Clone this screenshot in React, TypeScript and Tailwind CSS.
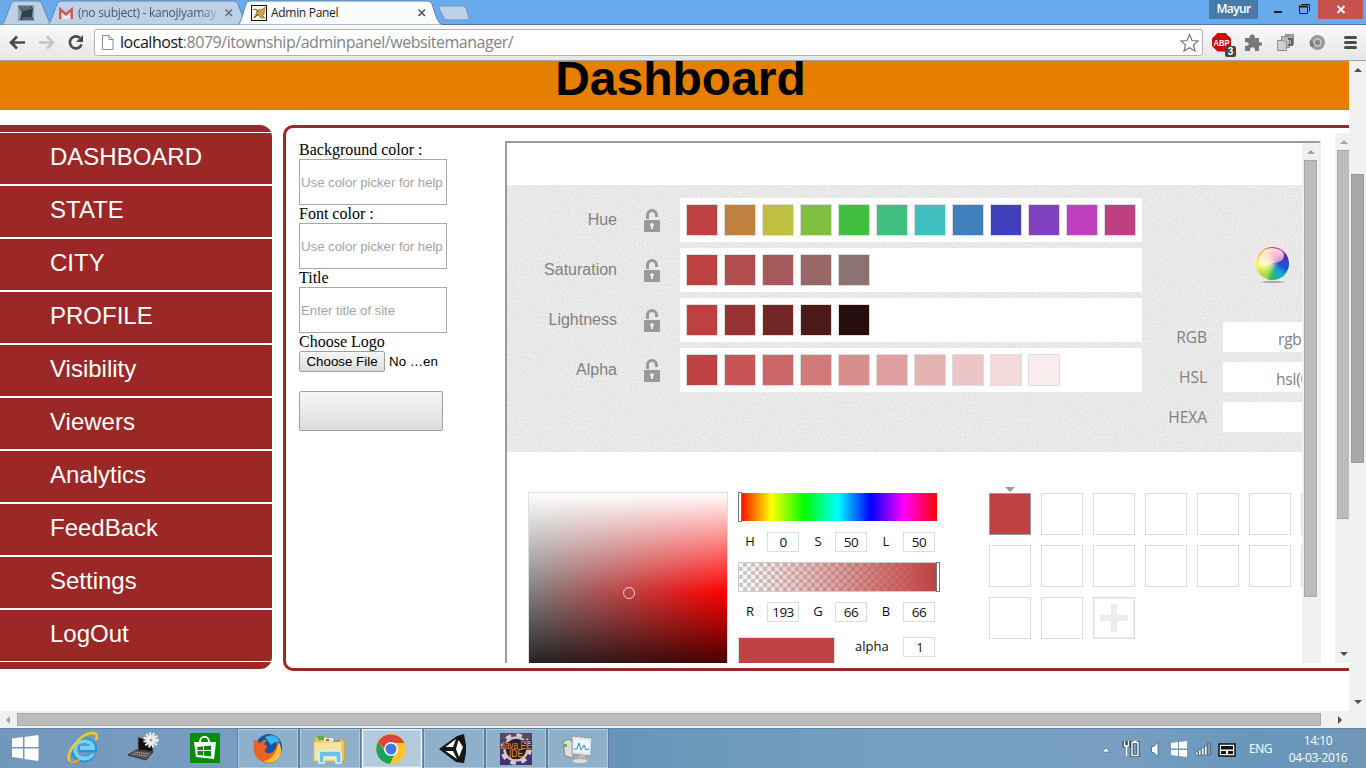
import React from 'react';

const UI = "font-['Open_Sans','Noto_Sans',sans-serif]";
const SANS = "font-['Liberation_Sans',Arial,sans-serif]";

function TabStrip() {
  return (
    <div className="relative flex h-[24px] w-full bg-[#67abec]">
      <svg className="absolute left-0 top-0" width="1366" height="25" viewBox="0 0 1366 25">
        <path d="M0 25 C4 24 4 22 6 17 L11 4 Q12 1 15 1 H38 Q41 1 42 4 L48 19 Q50 24 54 24.5 V25 Z" fill="#bcd1e6" stroke="#6287aa" />
        <path d="M47 25 Q50 24 51 20 L57 4 Q58 1 61 1 H234 Q237 1 238 4 L244 20 Q246 25 249 25 Z" fill="#bcd1e6" stroke="#6287aa" />
        <path d="M237 25 Q240 24 241 20 L246 4 Q247 1 250 1 H427 Q431 1 432 4 L437 19 Q439 24 443 25 Z" fill="#fbfbfb" stroke="#5f86ad" />
        <path d="M442 24.5 H1366" stroke="#4c79a6" />
        <path d="M440 6 H463 Q465 6 466 8 L469 18 Q469 20 467 20 H448 Q445 20 444 18 L439 8 Q438 6 440 6 Z" fill="#bcd1e6" stroke="#6c96bf" />
        <rect x="18" y="5" width="16" height="16" fill="#8e9fb0" />
        <path d="M18 6 H31 L33 8 L32 17 L34 20 H20 L22 12Z" fill="#323e48" />
        <path d="M18 6 H30 L32 9 L23 11Z" fill="#5c6f80" />
        <path d="M23 17 H33 V20 H21Z" fill="#4c6374" />
        <path d="M60.300 19 V9.500 L66 14.500 L71.700 9.500 V19" fill="#e8eaf0" stroke="#cf5550" strokeWidth="2.400" />
        <rect x="251.500" y="5.500" width="15" height="15" fill="#faf6e8" stroke="#111" />
        <path d="M257 11 L259 9 L261 10 L265 7 L264 14 L262 15 L265 18 H261 L258 15 L254 18 L256 14Z" fill="#d8a13b" stroke="#8a7540" strokeWidth=".700" />
        <path d="M253 10 L256 9 L258 12 M254 18 L258 14" stroke="#333" strokeWidth=".800" fill="none" />
        <path d="M225.500 9.500 L232 16 M232 9.500 L225.500 16" stroke="#66717c" strokeWidth="1.600" />
        <path d="M418.500 9.500 L425 16 M425 9.500 L418.500 16" stroke="#555" strokeWidth="1.600" />
      </svg>
      <div className={`${UI} relative flex w-full text-[12px] leading-[26px]`}>
        <span className="ml-[78px] w-[142px] whitespace-nowrap bg-gradient-to-r from-[#46525e] from-85% to-[#b0c4d8] bg-clip-text tracking-[-0.27px] text-transparent">(no subject) - kanojiyamay</span>
        <span className="ml-[51px] whitespace-nowrap tracking-[-0.3px] text-[#222]">Admin Panel</span>
      </div>
      <div className="relative flex shrink-0">
        <div className={`${UI} h-[19px] w-[49px] bg-[#477aa8] text-center text-[12px] font-semibold leading-[18px] tracking-[-0.6px] text-white`}>Mayur</div>
        <svg width="60" height="19" viewBox="0 0 60 19" fill="none" stroke="#1d1d1d">
          <path d="M16 12 H24" strokeWidth="2" />
          <path d="M42 6.500 H49.500 V13.500 H41.500 V6.500 M43.500 4.500 H51.500 V11.500" />
          <path d="M41 6.500 H50" strokeWidth="2" />
        </svg>
        <svg className="mr-[3px] bg-[#c75050]" width="45" height="19" viewBox="0 0 45 19">
          <path d="M19.500 6 L26.500 13 M26.500 6 L19.500 13" stroke="#fff" strokeWidth="1.800" />
        </svg>
      </div>
    </div>
  );
}

function Toolbar() {
  return (
    <div className="flex h-[37px] w-full items-start border-b border-t border-b-[#a3a3a3] border-t-[#e7ebef] bg-gradient-to-b from-[#fafafa] to-[#e6e6e6]">
      <svg width="94" height="34" viewBox="0 0 94 34" fill="none">
        <path d="M10.500 17.500 H25 M17 11.500 L11 17.500 L17 23.500" stroke="#4a4a4a" strokeWidth="2.700" />
        <path d="M39 17.500 H53 M47 11.500 L53 17.500 L47 23.500" stroke="#c4c4c4" strokeWidth="2.600" />
        <path d="M80 13 A6 6 0 1 0 81.500 19.500" stroke="#4a4a4a" strokeWidth="2.600" />
        <path d="M83 10 V17 H76 Z" fill="#4a4a4a" />
      </svg>
      <div className="mt-[4px] flex h-[27px] w-[1109px] rounded-[3px] border border-[#b3b3b3] bg-white">
        <svg width="25" height="25" viewBox="0 0 25 25" fill="#fff" stroke="#8b8b8b">
          <path d="M7.500 5.500 H14 L18 9.500 V19.500 H7.500 Z M14 5.500 V9.500 H18" />
        </svg>
        <div className={`${UI} grow whitespace-nowrap text-[16px] leading-[25px] tracking-[-0.47px] text-[#838383]`}>
          <span className="text-[#151515]">localhost</span>:8079/itownship/adminpanel/websitemanager/
        </div>
        <svg width="25" height="25" viewBox="0 0 25 25" fill="#fff" stroke="#777" strokeWidth="1.200">
          <path d="M12.500 4.500 L15 10.500 L21 10.900 L16.500 14.900 L18 21 L12.500 17.700 L7 21 L8.500 14.900 L4 10.900 L10 10.500 Z" />
        </svg>
      </div>
      <svg width="163" height="34" viewBox="1203 25 163 34">
        <path d="M1217.500 33 H1225.500 L1231 38.500 V46 L1225.500 51.500 H1217.500 L1212 46 V38.500 Z" fill="#cc0b0b" />
        <text x="1221.500" y="45.500" textAnchor="middle" fontFamily="Liberation Sans" fontWeight="700" fontSize="8.500" fill="#fff" textLength="16" lengthAdjust="spacingAndGlyphs">ABP</text>
        <rect x="1225" y="46" width="11" height="11" rx="2" fill="#444" />
        <text x="1230.500" y="55" textAnchor="middle" fontFamily="Liberation Sans" fontWeight="700" fontSize="10" fill="#fff">3</text>
        <path d="M1245 38 H1250 C1247.500 34 1256.500 33 1254.500 38 H1259 V42.500 C1263 40.500 1263 47.500 1259 45.500 V51 H1255 C1256 46 1249 46 1250 51 H1245 V46 C1250 46 1250 42 1245 42Z" fill="#777" />
        <g fill="#a9a9a9" stroke="#8c8c8c"><path d="M1285.500 34.500h8v10h-8z" /><path d="M1281.500 36.500h8v11h-8z" fill="#bbb" /><path d="M1277.500 40.500h6l3 3v7h-9z" fill="#d0d0d0" /></g>
        <path d="M1288 39h4v6h-4" fill="none" stroke="#666" strokeWidth="2" />
        <circle cx="1317.500" cy="42.500" r="7.500" fill="#999" /><path d="M1311 47 A8 8 0 0 1 1310 40 L1317 45Z" fill="#777" />
        <circle cx="1317.500" cy="42.500" r="3.500" fill="#888" stroke="#ccc" strokeWidth="1.500" />
        <path d="M1345.500 37.500 H1355.500 M1345.500 42.500 H1355.500 M1345.500 47.500 H1355.500" stroke="#4d4d4d" strokeWidth="3" strokeLinecap="round" />
      </svg>
    </div>
  );
}

const MENU = ['DASHBOARD', 'STATE', 'CITY', 'PROFILE', 'Visibility', 'Viewers', 'Analytics', 'FeedBack', 'Settings', 'LogOut'];

function Sidebar() {
  return (
    <nav className="h-[544px] w-[272px] shrink-0 rounded-r-[12px] bg-[#9c2727] py-[7px]">
      {MENU.map((m) => (
        <div key={m} className={`${SANS} h-[53px] border-y border-white pl-[50px] text-[24px] leading-[47px] text-white`}>{m}</div>
      ))}
    </nav>
  );
}

function Field({ label, hint }: { label: string; hint: string }) {
  return (
    <>
      <div className="h-[18px] text-[16px] leading-[18px]">{label}</div>
      <div className={`${SANS} h-[46px] w-[148px] whitespace-nowrap border border-[#a9a9a9] pl-px text-[13.333px] leading-[45px] tracking-[-0.08px] text-[#a4a4a4]`}>{hint}</div>
    </>
  );
}

function SettingsForm() {
  return (
    <form className="w-[206px] shrink-0 pt-[8px] font-['Liberation_Serif','Times_New_Roman',serif] text-black">
      <Field label="Background color :" hint="Use color picker for help" />
      <Field label="Font color :" hint="Use color picker for help" />
      <Field label="Title" hint="Enter title of site" />
      <div className="h-[18px] text-[16px] leading-[18px]">Choose Logo</div>
      <div className={`${SANS} flex h-[21px] text-[13.333px] leading-[19px]`}>
        <div className="w-[86px] rounded-[2px] border border-[#a0a0a0] bg-gradient-to-b from-[#f6f6f6] to-[#dcdcdc] text-center">Choose File</div>
        <span className="ml-[4px] leading-[21px]">No …en</span>
      </div>
      <div className="mt-[19px] h-[40px] w-[144px] rounded-[2px] border border-[#a0a0a0] bg-gradient-to-b from-[#f6f6f6] to-[#dcdcdc]" />
    </form>
  );
}

const ROWS: [string, string[]][] = [
  ['Hue', ['bg-[#bf4040]', 'bg-[#bf8040]', 'bg-[#bfbf40]', 'bg-[#80bf40]', 'bg-[#40bf40]', 'bg-[#40bf80]', 'bg-[#40bfbf]', 'bg-[#4080bf]', 'bg-[#4040bf]', 'bg-[#8040bf]', 'bg-[#bf40bf]', 'bg-[#bf4080]']],
  ['Saturation', ['bg-[#bf4040]', 'bg-[#b24d4d]', 'bg-[#a65959]', 'bg-[#996666]', 'bg-[#8c7373]']],
  ['Lightness', ['bg-[#bf4040]', 'bg-[#993333]', 'bg-[#732626]', 'bg-[#4c1919]', 'bg-[#260d0d]']],
  ['Alpha', ['bg-[#c14242]', 'bg-[#c75555]', 'bg-[#cd6666]', 'bg-[#d37a7a]', 'bg-[#da8d8d]', 'bg-[#e0a0a0]', 'bg-[#e6b3b3]', 'bg-[#ecc6c6]', 'bg-[#f3d9d9]', 'bg-[#f9ecec]']],
];

function Lock() {
  return (
    <svg className="ml-[27px] mt-[2px]" width="16" height="23" viewBox="0 0 16 23">
      <path d="M3.500 10 V6 A4.500 4.500 0 0 1 12.500 6 V8" fill="none" stroke="#999" strokeWidth="3" />
      <rect y="11" width="16" height="12" fill="#999" />
      <path d="M8 14 A2 2 0 0 1 9 17.700 V20 H7 V17.700 A2 2 0 0 1 8 14" fill="#eee" />
    </svg>
  );
}

function ColorFormats() {
  const formats = [['RGB', 'rgb(193, 66, 66)', 'pl-[55px]'], ['HSL', 'hsl(0, 50%, 50%)', 'pl-[53px]'], ['HEXA', '', 'pl-0']];
  return (
    <div className="w-[160px] shrink-0">
      <svg className="ml-[112px] mt-[61px]" width="36" height="39" viewBox="0 0 36 39">
        <defs>
          <linearGradient id="gloss" x1="0" y1="0" x2="0" y2="1"><stop offset="0" stopColor="#fff" /><stop offset="1" stopColor="#fff" stopOpacity=".45" /></linearGradient>
          <radialGradient id="fade"><stop stopColor="#fff" stopOpacity=".7" /><stop offset="1" stopColor="#fff" stopOpacity="0" /></radialGradient>
          <clipPath id="ball"><circle cx="18.500" cy="17.500" r="16.500" /></clipPath>
          <filter id="soft"><feGaussianBlur stdDeviation="2" /></filter>
          <filter id="shade" x="-20%" y="-100%" width="140%" height="300%"><feGaussianBlur stdDeviation="1 .5" /></filter>
        </defs>
        <ellipse cx="19" cy="36" rx="11" ry="1" fill="#888" opacity=".7" filter="url(#shade)" />
        <g clipPath="url(#ball)"><g filter="url(#soft)">
          <path d="M18.500 17.500 L5 -8 H25Z" fill="#ff3b18" /><path d="M18.500 17.500 L22 -8 L42 3Z" fill="#e9368f" /><path d="M18.500 17.500 L36 0 L44 17Z" fill="#542f9d" />
          <path d="M18.500 17.500 L42 12 L35 37Z" fill="#1c50dc" /><path d="M18.500 17.500 L36 30 L22 42Z" fill="#15aacb" /><path d="M18.500 17.500 L26 42 L6 40Z" fill="#29b765" />
          <path d="M18.500 17.500 L10 42 L-5 23Z" fill="#b3e029" /><path d="M18.500 17.500 L-5 28 V6Z" fill="#f3f22b" /><path d="M18.500 17.500 L-5 10 L8 -4Z" fill="#ffab25" />
        </g></g>
        <circle cx="11" cy="16" r="13" fill="url(#fade)" />
        <path d="M5 14 Q7 2 18 2 Q30 3 30 10 Q29 17 19 17 Q13 22 4 19Z" fill="url(#gloss)" opacity=".85" />
      </svg>
      <div className={`${UI} mt-[37px] flex flex-col gap-[10px] text-[15px] leading-[31px] text-[#808080]`}>
        {formats.map(([name, value, pad]) => (
          <div key={name} className="flex h-[30px]">
            <span className="w-[65px] text-right text-[15.5px]">{name}</span>
            <div className={`ml-[16px] w-[79px] overflow-hidden whitespace-nowrap bg-white text-[15.5px] leading-[34px] tracking-[-0.2px] ${pad}`}>{value}</div>
          </div>
        ))}
      </div>
    </div>
  );
}

function Palettes() {
  return (
    <div className="relative mt-[42px] flex h-[267px] overflow-hidden bg-[#f0f0f0]">
      <svg className="absolute left-0 top-0" width="795" height="267">
        <filter id="grain" x="0" y="0" width="1" height="1"><feTurbulence type="fractalNoise" baseFrequency="0.55" numOctaves="2" /><feColorMatrix values="0 0 0 0 0  0 0 0 0 0  0 0 0 0 0  0.12 0 0 0 -0.027" /></filter>
        <rect width="795" height="267" filter="url(#grain)" />
      </svg>
      <div className="relative flex flex-col gap-[6px] pt-[13px]">
        {ROWS.map(([name, colors]) => (
          <div key={name} className="flex h-[44px]">
            <span className={`${SANS} w-[110px] pt-[1px] text-right text-[16px] leading-[42px] text-[#808080]`}>{name}</span>
            <div className="w-[63px] shrink-0 pt-[9px]"><Lock /></div>
            <div className="flex w-[462px] gap-[6px] bg-white p-[6px]">
              {colors.map((c) => <div key={c} className={`h-[32px] w-[32px] border border-[#ddd] ${c}`} />)}
            </div>
          </div>
        ))}
      </div>
      <div className="relative"><ColorFormats /></div>
    </div>
  );
}

function Values({ items }: { items: [string, string][] }) {
  return (
    <div className={`${UI} flex h-[20px] text-[13px]`}>
      {items.map(([k, v], i) => (
        <div key={k} className={i === 0 ? 'flex w-[61px]' : 'flex w-[68px]'}>
          <span className={i === 0 ? 'w-[29px] pr-[5px] text-center leading-[18px]' : 'w-[36px] pl-[2px] text-center leading-[18px]'}>{k}</span>
          <div className={`${UI} h-[20px] w-[32px] border border-[#ddd] text-center text-[13.5px] leading-[19px] tracking-[-0.5px]`}>{v}</div>
        </div>
      ))}
    </div>
  );
}

function Picker() {
  return (
    <div className="flex h-[211px] overflow-hidden pl-[21px] text-[#111]">
      <div className="relative mt-[40px] h-[200px] w-[200px] shrink-0 border border-[#ddd] bg-[linear-gradient(to_bottom,#fff_0%,#ffffff00_50%,#00000000_50%,#000_100%),linear-gradient(to_right,#808080,#f00)]">
        <div className="absolute left-[94px] top-[94px] h-[12px] w-[12px] rounded-full border-[1.5px] border-[#ddd]" />
      </div>
      <div className="ml-[10px] mt-[40px] w-[202px] shrink-0">
        <div className="flex h-[30px]">
          <div className="h-[30px] w-[4px] border border-[#777] bg-white" />
          <div className="mt-px h-[28px] w-[195px] bg-[linear-gradient(to_right,#ff1500,#ff0_15%,#0f0_32%,#0ff_49%,#00f_66%,#f0f_83%,#f00)]" />
        </div>
        <div className="mt-[10px]"><Values items={[['H', '0'], ['S', '50'], ['L', '50']]} /></div>
        <div className="mt-[10px] flex h-[30px]">
          <div className="h-[30px] w-[198px] border border-r-0 border-[#ccc] bg-[linear-gradient(to_right,#c1424200,#c14242),repeating-conic-gradient(#ccc_0%_25%,#fff_0%_50%)] [background-size:auto,8px_8px]" />
          <div className="h-[30px] w-[4px] border border-[#777] bg-white" />
        </div>
        <div className="mt-[10px]"><Values items={[['R', '193'], ['G', '66'], ['B', '66']]} /></div>
        <div className={`${UI} mt-[15px] flex text-[13px]`}>
          <div className="h-[50px] w-[97px] border border-[#ddd] bg-[#c14242]" />
          <span className="ml-[20px] w-[48px] leading-[18px]">alpha</span>
          <div className="h-[20px] w-[32px] border border-[#ddd] pl-[2px] text-center leading-[19px]">1</div>
        </div>
      </div>
      <div className="ml-[49px] w-[313px] shrink-0 overflow-hidden pt-[35px]">
        <div className="h-[6px]">
          <svg className="ml-[16px]" width="10" height="6" viewBox="0 0 10 6"><path d="M0 0 H10 L5 5Z" fill="#999" /></svg>
        </div>
        <div className="grid grid-cols-[repeat(7,42px)] gap-[10px]">
          {Array.from({ length: 17 }, (_, i) => (
            <div key={i} className={i === 0 ? 'h-[42px] border border-[#999] bg-[#c14242]' : 'flex h-[42px] items-center justify-center border border-[#ddd] bg-white'}>
              {i === 16 && <svg width="40" height="40" viewBox="0 0 40 40"><path d="M20 6 V34 M6 20 H34" stroke="#ececec" strokeWidth="6" /><rect x=".5" y=".5" width="39" height="39" fill="none" stroke="#f1f1f1" /></svg>}
            </div>
          ))}
        </div>
      </div>
    </div>
  );
}

function Arrow({ dir, light }: { dir: 'up' | 'down' | 'left' | 'right'; light?: boolean }) {
  const d = { up: 'M0 4 L4 0 L8 4Z', down: 'M0 0 L4 4 L8 0Z', left: 'M4 0 L0 4 L4 8Z', right: 'M0 0 L4 4 L0 8Z' }[dir];
  const vertical = dir === 'up' || dir === 'down';
  return <svg className="shrink-0" width={vertical ? 8 : 4} height={vertical ? 4 : 8}><path d={d} fill={light ? '#a3a3a3' : '#505050'} /></svg>;
}

function ToolFrame() {
  return (
    <div className="mt-[8px] flex h-[522px] w-[816px] shrink-0 border-l-2 border-r-2 border-t-2 border-l-[#9a9a9a] border-r-[#eee] border-t-[#9a9a9a] bg-white">
      <div className="w-[795px] overflow-hidden"><Palettes /><Picker /></div>
      <div className="flex w-[17px] flex-col items-center bg-[#f1f1f1] pt-[7px]">
        <Arrow dir="up" light />
        <div className="mt-[6px] h-[437px] w-[13px] border border-[#a8a8a8] bg-[#bcbcbc]" />
      </div>
    </div>
  );
}

function WebPage() {
  return (
    <div className="flex h-[650px] w-full overflow-hidden bg-white">
      <div className="w-[1349px] shrink-0 overflow-hidden">
        <header className="flex h-[49px] items-end justify-center overflow-hidden bg-[#e67e00] pl-[12px]">
          <h1 className={`${SANS} mb-px text-[48px] font-bold leading-[60px] text-black`}>Dashboard</h1>
        </header>
        <div className="mt-[15px] flex">
          <Sidebar />
          <main className="ml-[11px] flex h-[546px] w-[1066px] shrink-0 rounded-l-[10px] border-y-[3px] border-l-[3px] border-[#9c2727] pb-[5px] pl-[13px] pt-[5px]">
            <SettingsForm />
            <ToolFrame />
            <div className="ml-[14px] flex w-[14px] flex-col overflow-hidden bg-[#f1f1f1] pb-[7px] pl-[2px] pt-[7px]">
              <div className="ml-[3px] h-[4px]"><Arrow dir="up" light /></div>
              <div className="mt-[6px] h-[369px] w-[14px] shrink-0 border border-[#a8a8a8] bg-[#bcbcbc]" />
              <div className="ml-[3px] mt-auto h-[4px]"><Arrow dir="down" /></div>
            </div>
          </main>
        </div>
      </div>
      <div className="flex w-[17px] flex-col items-center bg-[#f1f1f1] pb-[7px] pt-[7px]">
        <Arrow dir="up" />
        <div className="mb-auto mt-[102px] h-[289px] w-[13px] border border-[#999] bg-[#a9a9a9]" />
        <Arrow dir="down" />
      </div>
    </div>
  );
}

function PageScroll() {
  return (
    <div className="flex h-[17px] w-full items-center bg-[#f1f1f1] pl-[6px]">
      <Arrow dir="left" light />
      <div className="ml-[7px] mr-[17px] h-[13px] w-[1304px] border border-[#a8a8a8] bg-[#bcbcbc]" />
      <Arrow dir="right" />
    </div>
  );
}

function TaskIcon({ name }: { name: string }) {
  const art: Record<string, React.ReactNode> = {
    windows: <path d="M2 6.500 L13 5 V15 H2Z M14.500 5 L28.500 3 V15 H14.500Z M2 16.500 H13 V26.500 L2 25Z M14.500 16.500 H28.500 V29 L14.500 27Z" fill="#fff" />,
    ie: <g fill="none">
      <path d="M26 22 C22 30 7 29 7 17 C7 6 27 6 27 17 H12" stroke="#2a93cf" strokeWidth="6.500" />
      <path d="M26 22 C22 29 8 28 8 17 C8 7 26 7 26 16 H13" stroke="#6fd2f6" strokeWidth="4" />
      <path d="M3 29 C-3 23 12 2 25 1 Q32 1 29 8" stroke="#f2c62d" strokeWidth="2.600" />
      <path d="M3 29 Q7 32 13 27" stroke="#e5a91a" strokeWidth="2" />
    </g>,
    device: <g><path d="M11 5 L26 10 V20 L11 18Z" fill="#111" stroke="#777" /><path d="M9 18 L26 20 L19 28 L1 23Z" fill="#555" stroke="#333" /><path d="M7 20 L23 22 M5 22 L21 24" stroke="#aaa" strokeDasharray="1.500 .8" /><circle cx="24" cy="8" r="5.500" fill="#eee" stroke="#bbb" /><circle cx="24" cy="8" r="6.500" fill="none" stroke="#e9edf2" strokeWidth="2.500" strokeDasharray="2 1.500" /><circle cx="24" cy="8" r="1.500" fill="#999" /></g>,
    store: <g><path d="M0 1h30v30H0z" fill="#078c07" /><path d="M4 10 H26 L24 27 L6 25Z" fill="#fff" /><path d="M10 10 C10 3 19 3 19 10" fill="none" stroke="#fff" strokeWidth="1.800" /><path d="M7.500 15 L13 14.300 V18 H7.500Z M14 14.200 L21 13.500 V18 H14Z M7.500 19 H13 V23.500 L7.500 23Z M14 19 H21 V24.500 L14 23.700Z" fill="#078c07" /></g>,
    firefox: <g><circle cx="17" cy="14" r="13" fill="#17539f" /><path d="M13 4 Q24 -1 28 9 Q23 8 19 12" fill="#39b5e7" /><path d="M2 7 Q5 7 8 10 Q11 6 15 7 L12 11 Q18 14 13 16 Q12 21 19 20 Q25 17 25 8 Q32 17 27 25 Q21 33 11 29 Q-1 24 2 7" fill="#e76520" /><path d="M27 9 Q32 20 25 27 Q18 32 11 28 Q22 28 27 9" fill="#ffc13b" /></g>,
    folder: <g><path d="M0 6 L4 3 H11 L14 6 H29 L31 9 V28 H1Z" fill="#e3c367" stroke="#c99c36" /><path d="M4 3h6v4H4z" fill="#41b455" /><path d="M10 5h9v4h-9z" fill="#eee" /><path d="M12 6h3v2h-3z" fill="#d44a3c" /><path d="M20 7h6v3h-6z" fill="#3d9ed5" /><path d="M0 9 H28 V28 H0Z" fill="#f5e59f" stroke="#e3c367" /><path d="M5 30 V20 Q5 18 7 18 H24 Q27 18 27 20 V30 H22 V24 H10 V30Z" fill="#6fc0e1" stroke="#d4f5ff" strokeWidth="1.500" /></g>,
    chrome: <g><circle cx="15" cy="16" r="15" fill="#fbc52b" /><path d="M2 9 A15 15 0 0 1 28.500 10 H15 Q9 10 9 17Z" fill="#df4438" /><path d="M2 9 L10 20 Q12 23 18 22 L14 31 A15 15 0 0 1 2 9" fill="#1ba15b" /><circle cx="15" cy="16" r="7" fill="#fff" /><circle cx="15" cy="16" r="5.500" fill="#3d79e8" /></g>,
    unity: <g><path d="M1 16 L19 3 L26 1 L28 12 V20 L26 30 L18 29Z" fill="#161616" /><path d="M7.500 14 L18 6 L15 14Z M7.500 18 L15 18 L19 26Z M20.500 7 L25 14 L21 24 L18 16Z" fill="#fff" /></g>,
    java: <g><path d="M0 0h32v32H0z" fill="#47306c" /><path d="M0 0h32v8H0z" fill="#54496a" /><circle cx="16" cy="16" r="14" fill="none" stroke="#d7d1d2" strokeWidth="3.500" strokeDasharray="5.500 5.500" /><circle cx="16" cy="16" r="11.500" fill="#25202a" stroke="#c9c4c6" strokeWidth="2.500" /><text x="16" y="16" textAnchor="middle" fontFamily="Liberation Sans" fontSize="10.500" fill="#ff8a26" stroke="#25202a" strokeWidth="1.500" paintOrder="stroke" textLength="31" lengthAdjust="spacingAndGlyphs">Java EE</text><text x="16" y="24" textAnchor="middle" fontFamily="Liberation Sans" fontSize="10.500" fill="#ff8a26" textLength="14" lengthAdjust="spacingAndGlyphs">IDE</text></g>,
    monitor: <g><path d="M1 9 L6 6 L11 9 V25 L3 23Z" fill="#ddd" stroke="#888" /><path d="M2 11h3v3H2z" fill="#68b528" /><path d="M10 3 L30 5 L29 23 L10 21Z" fill="#e4e5e6" stroke="#999" /><path d="M12 6 L27 7.500 V20 L12 18.500Z" fill="#ecfaff" /><path d="M12 16 L15 16 L17 10 L19 17 L22 12 L24 17 L27 16" fill="none" stroke="#2789c4" /><path d="M16 22h7v5H16z" fill="#bbb" /><ellipse cx="18" cy="28" rx="8" ry="2.500" fill="#ddd" stroke="#aaa" /></g>,
  };
  return <svg className="shrink-0 overflow-visible" width="32" height="32" viewBox="0 0 32 32">{art[name]}</svg>;
}

function Taskbar() {
  return (
    <footer className="flex h-[40px] w-full border-t border-[#5d87a8] bg-[linear-gradient(90deg,#7198ba_0%,#789fc1_20%,#6795b8_45%,#779fbf_65%,#789fc1_82%,#6896bb_92%,#7096b6_100%)]">
      <div className="flex w-[238px] gap-[25px] pl-[10px] pt-[3px]">
        <TaskIcon name="windows" />
        <TaskIcon name="ie" />
        <div className="ml-[3px]"><TaskIcon name="device" /></div>
        <div className="ml-[6px]"><TaskIcon name="store" /></div>
      </div>
      <div className="flex gap-[2px]">
        {['firefox', 'folder', 'chrome', 'unity', 'java', 'monitor'].map((n) => (
          <div key={n} className={n === 'chrome' ? 'flex h-[39px] w-[60px] items-start justify-center border border-[#eef4f9] bg-[#b4cadd] pt-[3px] outline outline-1 -outline-offset-2 outline-[#c6d8e6]' : 'flex h-[39px] w-[60px] items-start justify-center border border-[#b0c8dc] bg-[#8fb0ca] pt-[3px] shadow-[0_0_0_1px_#587f9f]'}>
            <TaskIcon name={n} />
          </div>
        ))}
      </div>
      <div className="ml-auto flex">
        <svg width="140" height="39" viewBox="1100 729 140 39">
          <path d="M1102 752 L1106 748 L1110 752Z" fill="#fff" stroke="#43627d" strokeWidth=".600" />
          <g fill="none" stroke="#314a60" strokeWidth="3.200"><path d="M1132 742.500 H1138 V755.500 H1132Z M1126.500 741 V756 M1124 741 V746 H1129 V741" /></g>
          <g fill="none" stroke="#fff" strokeWidth="1.400"><path d="M1132 742.500 H1138 V755.500 H1132Z M1133.500 741.500 H1136.500" /><path d="M1124.500 741 V746 H1128.500 V741" /><path d="M1126.500 745 V756" strokeWidth="2" /></g>
          <path d="M1151.500 746.500 H1154 L1158 742 V757 L1154 752.500 H1151.500Z" fill="#fff" stroke="#43627d" strokeWidth=".800" />
          <path d="M1171 743 L1178 742 V748.500 H1171Z M1179 742 L1187 741 V748.500 H1179Z M1171 750 H1178 V756 L1171 755Z M1179 750 H1187 V757 L1179 756Z" fill="#fff" />
          <g fill="#fff" stroke="#3f5e78" strokeWidth=".700"><path d="M1195.500 752h2.500v3h-2.500zM1198.500 750h2.500v5h-2.500zM1201.500 748h2.500v7h-2.500zM1204.500 746h2.500v9h-2.500z" /><path d="M1207.500 743h3v12h-3z" fill="#8b9aaa" /></g>
          <rect x="1219" y="744" width="16" height="12" fill="#fff" stroke="#111" strokeWidth="1.500" /><path d="M1221 746h12v3.500h-12zM1221 751h5v3h-5zM1228 751h5v3h-5z" fill="#111" />
        </svg>
        <span className={`${UI} ml-[9px] w-[39px] text-[12px] leading-[39px] tracking-[-0.5px] text-white`}>ENG</span>
        <div className={`${UI} w-[60px] pt-[3px] text-center text-[12px] leading-[17px] tracking-[-0.4px] text-white`}><div>14:10</div><div>04-03-2016</div></div>
        <div className="w-[18px]" />
      </div>
    </footer>
  );
}

export default function App() {
  return (
    <div className="flex h-[768px] w-[1366px] flex-col overflow-hidden">
      <TabStrip />
      <Toolbar />
      <WebPage />
      <PageScroll />
      <Taskbar />
    </div>
  );
}
